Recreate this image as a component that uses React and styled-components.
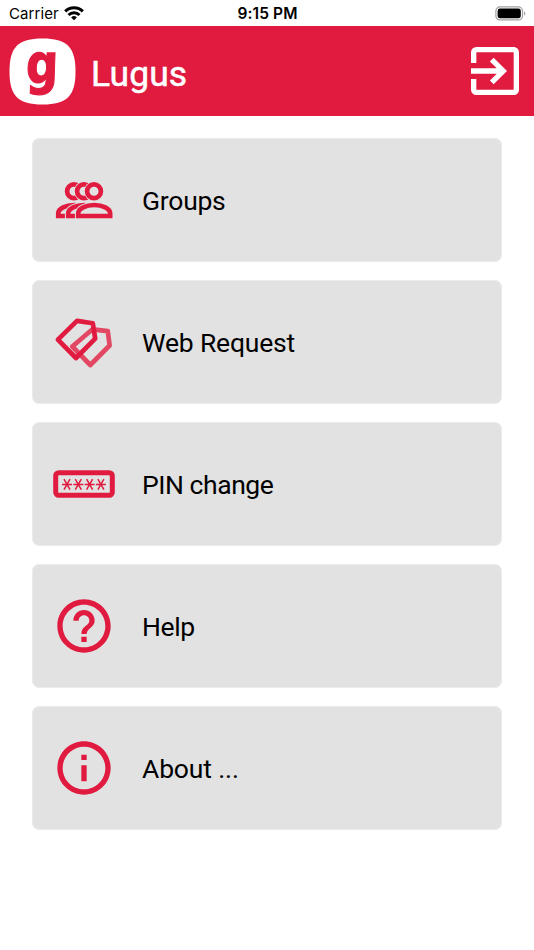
import React from "react";
import styled, { createGlobalStyle } from "styled-components";
import { MdExitToApp, MdHelpOutline, MdInfoOutline } from "react-icons/md";

const RED = "#e11b3f";
const GREY = "#e2e2e2";

const GlobalStyle = createGlobalStyle`
  body {
    margin: 0;
    background: #fff;
  }
`;

// Styled components
const Screen = styled.div`
  box-sizing: border-box;
  width: 534px;
  height: 950px;
  overflow: hidden;
  background: #fff;
  font-family: Roboto, "Liberation Sans", sans-serif;
`;

const StatusBar = styled.div`
  display: grid;
  grid-template-columns: 1fr auto 1fr;
  align-items: center;
  box-sizing: border-box;
  height: 26px;
  padding: 1px 8px 0 9px;
  font-family: Inter, "Liberation Sans", sans-serif;
  font-size: 15px;
  color: #000;
`;

const Carrier = styled.div`
  display: flex;
  align-items: center;
  gap: 5px;
  letter-spacing: 0.1px;
`;

const Clock = styled.div`
  font-size: 15.5px;
  font-weight: 600;
  letter-spacing: 0.1px;
`;

const BatterySlot = styled.div`
  display: flex;
  justify-content: flex-end;
`;

const Header = styled.header`
  display: flex;
  align-items: center;
  box-sizing: border-box;
  height: 90px;
  padding: 0 7px 0 9px;
  background: ${RED};
  color: #fff;
`;

const LogoMark = styled.svg`
  flex: none;
  overflow: visible;
`;

const Title = styled.h1`
  flex: 1;
  margin: 5px 0 0 15px;
  font-size: 35.5px;
  font-weight: 400;
  line-height: 42px;
  letter-spacing: 0.1px;
  -webkit-text-stroke: 0.5px #fff;
`;

const LogoutIcon = styled(MdExitToApp)`
  width: 64px;
  height: 64px;
`;

const Menu = styled.nav`
  display: flex;
  flex-direction: column;
  gap: 18px;
  padding: 22px 32px;
`;

const MenuItem = styled.div`
  display: flex;
  align-items: center;
  box-sizing: border-box;
  height: 124px;
  border: 1px solid #ebebeb;
  border-radius: 7px;
  background: ${GREY};
`;

const IconSlot = styled.div`
  display: flex;
  justify-content: center;
  width: 102px;
  color: ${RED};

  svg {
    flex: none;
  }
`;

const Label = styled.span`
  margin: 2px 0 0 7px;
  font-size: 26.5px;
  line-height: 32px;
  letter-spacing: ${({ $spacing }) => $spacing}px;
  color: #000;
`;

const WifiIcon = () => (
  <svg width="20" height="15" viewBox="0 0 20 15" fill="none" stroke="#000">
    <path d="M1.200 5.400a12.600 12.600 0 0 1 17.600 0" strokeWidth="3.100" />
    <path d="M4.500 9a7.900 7.900 0 0 1 11 0" strokeWidth="2.900" />
    <path d="M10 14.300L7.100 11.500a4.200 4.200 0 0 1 5.800 0z" fill="#000" stroke="none" />
  </svg>
);

const BatteryIcon = () => (
  <svg width="31" height="15" viewBox="0 0 31 15">
    <rect x="0.900" y="0.900" width="26.600" height="13" rx="4" fill="none" stroke="#a0a0a0" strokeWidth="1.200" />
    <rect x="2.600" y="2.600" width="23.200" height="9.600" rx="2.300" fill="#000" />
    <path d="M29 5.200c1.800.7 1.800 3.800 0 4.500z" fill="#a0a0a0" />
  </svg>
);

const Logo = () => (
  <LogoMark width="67" height="67" viewBox="0 0 67 67">
    <path
      d="M33.500 0.500C58 0.500 66.500 9 66.500 33.500S58 66.500 33.500 66.500 0.500 58 0.500 33.500 9 0.500 33.500 0.500z"
      fill="#fff"
    />
    <text
      transform="translate(16.500 44.500) skewX(-2) scale(0.820 1)"
      fill={RED}
      stroke={RED}
      strokeWidth="1.200"
      fontFamily="'DejaVu Sans', sans-serif"
      fontSize="55"
      fontWeight="700"
    >
      g
    </text>
  </LogoMark>
);

// Three people, each one cut out of the one behind it
const GroupsIcon = () => (
  <svg width="60" height="40" viewBox="0 0 60 40">
    {[0, 10, 20].map((x) => (
      <g key={x} transform={`translate(${x} 0)`}>
        <circle cx="20" cy="11.300" r="10" fill={GREY} />
        <circle cx="20" cy="11.300" r="6.900" fill="none" stroke={RED} strokeWidth="4.700" />
        <path
          d="M4.200 36V33.500C4.200 28.500 12 25 20.200 25S36.200 28.500 36.200 33.500V36z"
          fill={GREY}
          stroke={GREY}
          strokeWidth="6.600"
        />
        <path
          d="M4.200 36V33.500C4.200 28.500 12 25 20.200 25S36.200 28.500 36.200 33.500V36z"
          fill={GREY}
          stroke={RED}
          strokeWidth="4.600"
        />
      </g>
    ))}
  </svg>
);

const TagsIcon = () => (
  <svg width="60" height="52" viewBox="0 0 60 52" fill="none" strokeWidth="4.700" strokeLinejoin="round">
    <path d="M38.500 13.300L53.800 15.200 55.600 29.500 36.300 49 18.300 30.500z" stroke={RED} opacity="0.780" />
    <path d="M23 4.900L38.800 7.300 41.200 22.700 22 42 3.900 23.700z" stroke={RED} />
  </svg>
);

const PinIcon = () => (
  <svg width="62" height="28" viewBox="0 0 62 28" fill="none" stroke={RED}>
    <rect x="2.700" y="2.700" width="56.600" height="22.600" rx="3" strokeWidth="5" />
    {[14, 25.300, 36.600, 47.900].map((x) => (
      <path
        key={x}
        transform={`translate(${x} 14.400)`}
        d="M-5 0H5M-3-5.300L3 5.300M3-5.300L-3 5.300"
        strokeWidth="1.500"
      />
    ))}
  </svg>
);

const items = [
  { label: "Groups", icon: <GroupsIcon />, spacing: -0.25 },
  { label: "Web Request", icon: <TagsIcon />, spacing: -0.18 },
  { label: "PIN change", icon: <PinIcon />, spacing: -0.45 },
  { label: "Help", icon: <MdHelpOutline size={64} />, spacing: -0.4 },
  { label: "About ...", icon: <MdInfoOutline size={64} />, spacing: -0.15 },
];

const App = () => {
  return (
    <Screen>
      <GlobalStyle />
      <StatusBar>
        <Carrier>
          Carrier
          <WifiIcon />
        </Carrier>
        <Clock>9:15 PM</Clock>
        <BatterySlot>
          <BatteryIcon />
        </BatterySlot>
      </StatusBar>
      <Header>
        <Logo />
        <Title>Lugus</Title>
        <LogoutIcon />
      </Header>
      <Menu>
        {items.map((item) => (
          <MenuItem key={item.label}>
            <IconSlot>{item.icon}</IconSlot>
            <Label $spacing={item.spacing}>{item.label}</Label>
          </MenuItem>
        ))}
      </Menu>
    </Screen>
  );
};

export default App;
